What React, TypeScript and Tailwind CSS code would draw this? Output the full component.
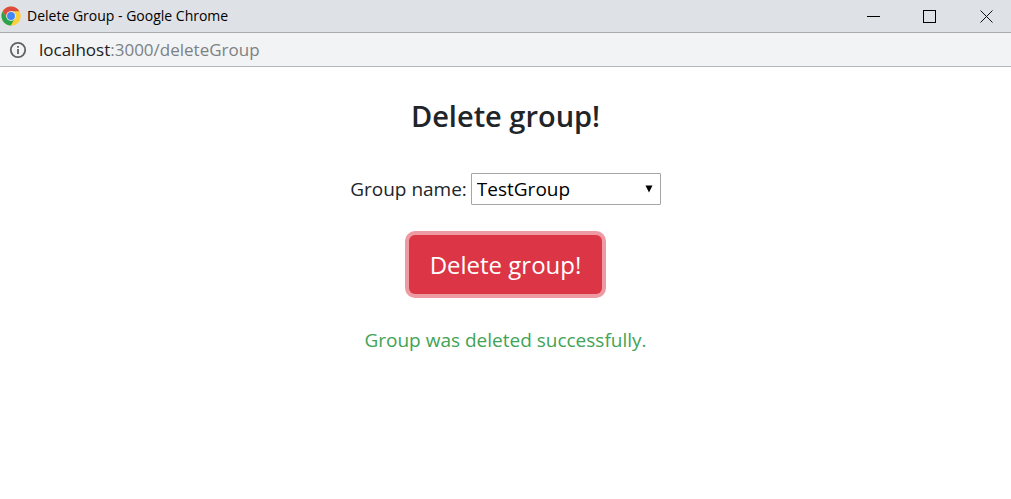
import { useState } from "react";

function ChromeLogo() {
  return (
    <svg viewBox="0 0 48 48" className="size-5 shrink-0" aria-hidden="true">
      <circle cx="24" cy="24" r="23" fill="#fbcf3b" />
      <path d="M24 13 H44.2 A23 23 0 0 0 4.1 12.5 L14.5 29.5 Z" fill="#dd4b3e" />
      <path d="M4.1 12.5 A23 23 0 0 0 24 47 L33.5 29.5 L24 34.5 L14.5 29.5 Z" fill="#2ba24c" />
      <path d="M24 47 A23 23 0 0 0 44.2 13 H24 L33.5 29.5 Z" fill="#fbcf3b" />
      <circle cx="24" cy="24" r="11.5" fill="#f1f1f1" />
      <circle cx="24" cy="24" r="9.5" fill="#4285f4" />
    </svg>
  );
}

function InfoIcon() {
  return (
    <svg viewBox="0 0 18 18" className="size-[18px] shrink-0" fill="none" aria-hidden="true">
      <circle cx="9" cy="9" r="7.2" stroke="#5f6368" strokeWidth="1.8" />
      <path d="M9 8v5M9 5v1.8" stroke="#5f6368" strokeWidth="1.8" />
    </svg>
  );
}

function TitleBar() {
  return (
    <header className="flex h-[33px] items-center border-b border-[#a9abae] bg-[#dee1e6]">
      <div className="flex flex-1 items-center gap-1.5 pl-px">
        <ChromeLogo />
        <span className="text-sm leading-5 text-black">Delete Group - Google Chrome</span>
      </div>
      <div className="flex">
        <button type="button" aria-label="Minimize" className="flex h-8 w-14 items-center justify-center">
          <svg viewBox="0 0 14 14" className="size-3.5" fill="none" stroke="#000" shapeRendering="crispEdges">
            <path d="M1 7.5h13" />
          </svg>
        </button>
        <button type="button" aria-label="Maximize" className="flex h-8 w-14 items-center justify-center">
          <svg viewBox="0 0 14 14" className="size-3.5" fill="none" stroke="#000" shapeRendering="crispEdges">
            <path d="M1.5 1.5h12v12h-12z" />
          </svg>
        </button>
        <button type="button" aria-label="Close" className="flex h-8 w-[54px] items-center justify-center pl-1">
          <svg viewBox="0 0 14 14" className="size-3.5" fill="none" stroke="#111">
            <path d="M1.5 1.5l12 12M13.5 1.5l-12 12" />
          </svg>
        </button>
      </div>
    </header>
  );
}

function AddressBar() {
  return (
    <div className="flex h-[34px] items-center gap-3 border-b border-[#b3b5b8] bg-[#f1f3f4] pl-[9px]">
      <InfoIcon />
      <span className="text-[17px] leading-6 text-[#7d8185]">
        <span className="text-[#202124]">localhost</span>:3000/deleteGroup
      </span>
    </div>
  );
}

export default function App() {
  const [group, setGroup] = useState("TestGroup");

  return (
    <div className="min-h-screen bg-white font-['Open_Sans','Noto_Sans',sans-serif] text-[#212529]">
      <TitleBar />
      <AddressBar />
      <main className="flex flex-col items-center pt-[31px]">
        <h1 className="text-[29px] leading-9 font-semibold">Delete group!</h1>
        <div className="mt-[39px] flex items-center gap-1">
          <label htmlFor="group" className="text-[19px] leading-8">
            Group name:
          </label>
          <div className="relative">
            <select
              id="group"
              value={group}
              onChange={(e) => setGroup(e.target.value)}
              className="block h-8 w-[190px] appearance-none rounded-[1px] border border-[#a6a6a6] bg-white pl-[5px] text-[19px] leading-7 text-black"
            >
              <option>TestGroup</option>
            </select>
            <svg viewBox="0 0 8 8" className="pointer-events-none absolute top-3 right-2 size-2" aria-hidden="true">
              <path d="M0.5 0.5h7L4 7.5z" fill="#000" />
            </svg>
          </div>
        </div>
        <button
          type="button"
          className="mt-[30px] h-[59px] rounded-md bg-[#dc3545] px-[21px] text-2xl text-white ring-4 ring-[#ed9aa2]"
        >
          Delete group!
        </button>
        <p role="status" className="mt-[30px] text-[19px] leading-8 text-[#41a356]">
          Group was deleted successfully.
        </p>
      </main>
    </div>
  );
}
